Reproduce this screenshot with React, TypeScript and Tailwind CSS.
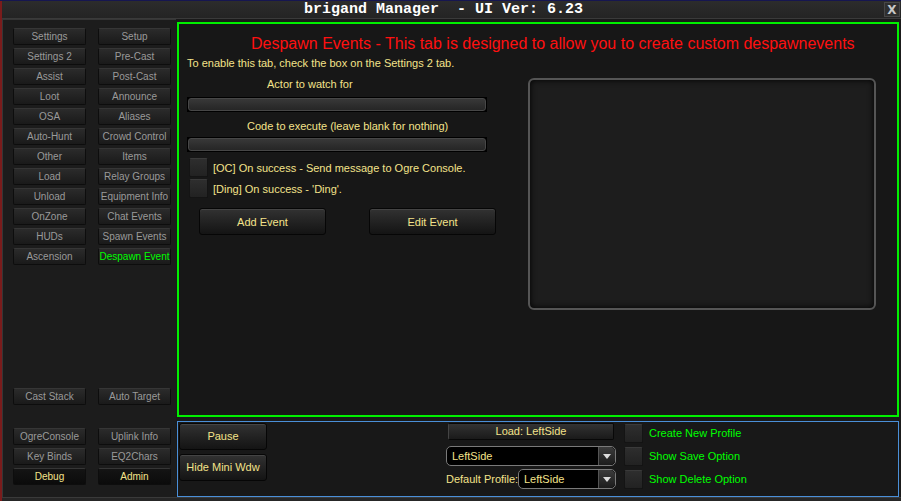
import React from 'react';

const leftRows: [string, string][] = [
  ['Settings', 'Setup'],
  ['Settings 2', 'Pre-Cast'],
  ['Assist', 'Post-Cast'],
  ['Loot', 'Announce'],
  ['OSA', 'Aliases'],
  ['Auto-Hunt', 'Crowd Control'],
  ['Other', 'Items'],
  ['Load', 'Relay Groups'],
  ['Unload', 'Equipment Info'],
  ['OnZone', 'Chat Events'],
  ['HUDs', 'Spawn Events'],
  ['Ascension', 'Despawn Event'],
];

type Tone = 'gray' | 'green' | 'yellow';

const Tab: React.FC<{ label: string; tone?: Tone }> = ({ label, tone = 'gray' }) => {
  const color =
    tone === 'green' ? 'text-[#00ff00]' : tone === 'yellow' ? 'text-[#f4e38a]' : 'text-[#9a9a9a]';
  const bg =
    tone === 'yellow'
      ? 'bg-linear-to-b from-[#141414] to-[#0b0b0b]'
      : 'bg-linear-to-b from-[#2b2b2b] to-[#1a1a1a]';
  return (
    <div
      className={`h-[17px] w-[73px] flex items-center justify-center whitespace-nowrap rounded-[2px] border border-[#0d0d0d] border-t-[#363636] text-[10px] leading-none ${bg} ${color}`}
    >
      {label}
    </div>
  );
};

const TabRow: React.FC<{ a: string; b: string; ta?: Tone; tb?: Tone; className?: string }> = ({
  a,
  b,
  ta,
  tb,
  className = '',
}) => (
  <div className={`flex gap-[12px] ${className}`}>
    <Tab label={a} tone={ta} />
    <Tab label={b} tone={tb} />
  </div>
);

const Field: React.FC = () => (
  <div className="h-[15px] w-[300px] bg-black p-[1px]">
    <div className="h-full w-full rounded-[3px] border border-[#474747] bg-linear-to-b from-[#383838] to-[#262626]" />
  </div>
);

const Check: React.FC = () => (
  <div className="h-[19px] w-[19px] shrink-0 rounded-[2px] border border-[#141414] border-t-[#3a3a3a] bg-linear-to-b from-[#2e2e2e] to-[#222222]" />
);

const Btn: React.FC<{ label: string; className?: string }> = ({ label, className = '' }) => (
  <div
    className={`flex shrink-0 items-center justify-center rounded-[3px] border border-[#060606] bg-linear-to-b from-[#323232] to-[#141414] text-[11px] text-[#f4e38a] shadow-[inset_0_1px_0_#444] ${className}`}
  >
    {label}
  </div>
);

const Select: React.FC<{ value: string; className?: string }> = ({ value, className = '' }) => (
  <div className={`flex h-[20px] rounded-[5px] border border-[#7a7a7a] bg-black ${className}`}>
    <div className="flex flex-1 items-center pl-[5px] text-[11px] text-[#f4e38a]">{value}</div>
    <div className="flex w-[17px] items-center justify-center rounded-r-[5px] border-l border-[#555] bg-linear-to-b from-[#3c3c3c] to-[#1c1c1c]">
      <svg width="8" height="5" viewBox="0 0 8 5">
        <polygon points="0,0 8,0 4,5" fill="#dcdcdc" />
      </svg>
    </div>
  </div>
);

export default function App() {
  return (
    <div className="flex h-[501px] w-[901px] flex-col overflow-hidden bg-[#7a1c1c] font-['Liberation_Sans',Arial,sans-serif]">
      <div className="h-[1px] bg-[#161650]" />
      <div className="flex flex-1 pl-[2px]">
        <div className="flex flex-1 flex-col bg-[#1a1a1a]">
          {/* Title bar */}
          <div className="flex h-[18px] items-center border-b border-[#3a3a3a] bg-linear-to-b from-[#2c2c2c] to-[#242424] pl-[302px]">
            <span className="whitespace-pre font-['Liberation_Mono',monospace] text-[15px] font-bold leading-none text-white">
              brigand Manager  - UI Ver: 6.23
            </span>
            <div className="ml-auto mr-[1px] flex h-[15px] w-[16px] items-center justify-center border border-[#474747] bg-[#2f2f2f] font-['DejaVu_Sans',sans-serif] text-[12px] font-bold text-[#c8c8c8]">
              X
            </div>
          </div>

          {/* Body */}
          <div className="flex flex-1">
            {/* Left navigation */}
            <div className="flex w-[174px] flex-col border-l border-t border-[#363636] bg-[#1c1c1c] pl-[10px] pt-[8px]">
              <div className="flex flex-col gap-[3px]">
                {leftRows.map(([a, b], i) => (
                  <TabRow key={a} a={a} b={b} tb={i === leftRows.length - 1 ? 'green' : 'gray'} />
                ))}
              </div>
              <TabRow a="Cast Stack" b="Auto Target" className="mt-[123px]" />
              <div className="mt-[23px] flex flex-col gap-[3px]">
                <TabRow a="OgreConsole" b="Uplink Info" />
                <TabRow a="Key Binds" b="EQ2Chars" />
                <TabRow a="Debug" b="Admin" ta="yellow" tb="yellow" />
              </div>
            </div>

            {/* Right content */}
            <div className="flex flex-1 flex-col pl-[1px] pr-[2px] pt-[3px]">
              {/* Main tab */}
              <div className="flex h-[395px] flex-col border-2 border-[#00f000] bg-[#171717]">
                <div className="ml-[72px] mt-[10px] whitespace-nowrap text-[16px] leading-[20px] text-[#ff1010]">
                  Despawn Events - This tab is designed to allow you to create custom despawnevents
                </div>
                <div className="ml-[8px] mt-[2px] text-[11px] leading-[14px] text-[#f4e38a]">
                  To enable this tab, check the box on the Settings 2 tab.
                </div>
                <div className="ml-[8px] mt-[7px] flex">
                  <div className="flex w-[300px] flex-col text-[11px] leading-[14px] text-[#f4e38a]">
                    <div className="ml-[80px]">Actor to watch for</div>
                    <div className="mt-[6px]">
                      <Field />
                    </div>
                    <div className="ml-[60px] mt-[7px]">Code to execute (leave blank for nothing)</div>
                    <div className="mt-[4px]">
                      <Field />
                    </div>
                    <div className="ml-[2px] mt-[6px] flex flex-col gap-[2px]">
                      <div className="flex items-center gap-[5px]">
                        <Check />
                        <span className="whitespace-nowrap">[OC] On success - Send message to Ogre Console.</span>
                      </div>
                      <div className="flex items-center gap-[5px]">
                        <Check />
                        <span className="whitespace-nowrap">[Ding] On success - 'Ding'.</span>
                      </div>
                    </div>
                    <div className="ml-[12px] mt-[10px] flex gap-[43px]">
                      <Btn label="Add Event" className="h-[27px] w-[127px]" />
                      <Btn label="Edit Event" className="h-[27px] w-[127px]" />
                    </div>
                  </div>
                  <div className="ml-[41px] mt-[1px] h-[232px] w-[348px] rounded-[6px] border-2 border-[#555555] bg-[#1d1d1d] shadow-[inset_0_0_6px_#000]" />
                </div>
              </div>

              {/* Profile strip */}
              <div className="mt-[4px] flex h-[76px] border border-[#4a8fd8] bg-[#181818]">
                <div className="ml-[1px] mt-[1px] flex flex-col gap-[4px]">
                  <Btn label="Pause" className="h-[27px] w-[88px]" />
                  <Btn label="Hide Mini Wdw" className="h-[27px] w-[88px]" />
                </div>
                <div className="ml-[179px] mt-[1px] flex w-[170px] flex-col">
                  <div className="ml-[2px] flex h-[17px] w-[166px] items-center justify-center rounded-[2px] border border-[#080808] border-l-[#444] bg-linear-to-b from-[#333333] to-[#1a1a1a] text-[11px] text-[#f4e38a]">
                    Load: LeftSide
                  </div>
                  <Select value="LeftSide" className="mt-[6px] w-[170px]" />
                  <div className="mt-[3px] flex items-center">
                    <span className="w-[72px] whitespace-nowrap text-[11px] text-[#f4e38a]">Default Profile:</span>
                    <Select value="LeftSide" className="w-[98px]" />
                  </div>
                </div>
                <div className="ml-[8px] mt-[2px] flex flex-col gap-[4px]">
                  {['Create New Profile', 'Show Save Option', 'Show Delete Option'].map((t) => (
                    <div key={t} className="flex items-center gap-[6px]">
                      <Check />
                      <span className="whitespace-nowrap text-[11px] text-[#00ff00]">{t}</span>
                    </div>
                  ))}
                </div>
              </div>
            </div>
          </div>
          <div className="h-[4px] border-t border-[#3a3a3a] bg-[#262626]" />
        </div>
      </div>
    </div>
  );
}
